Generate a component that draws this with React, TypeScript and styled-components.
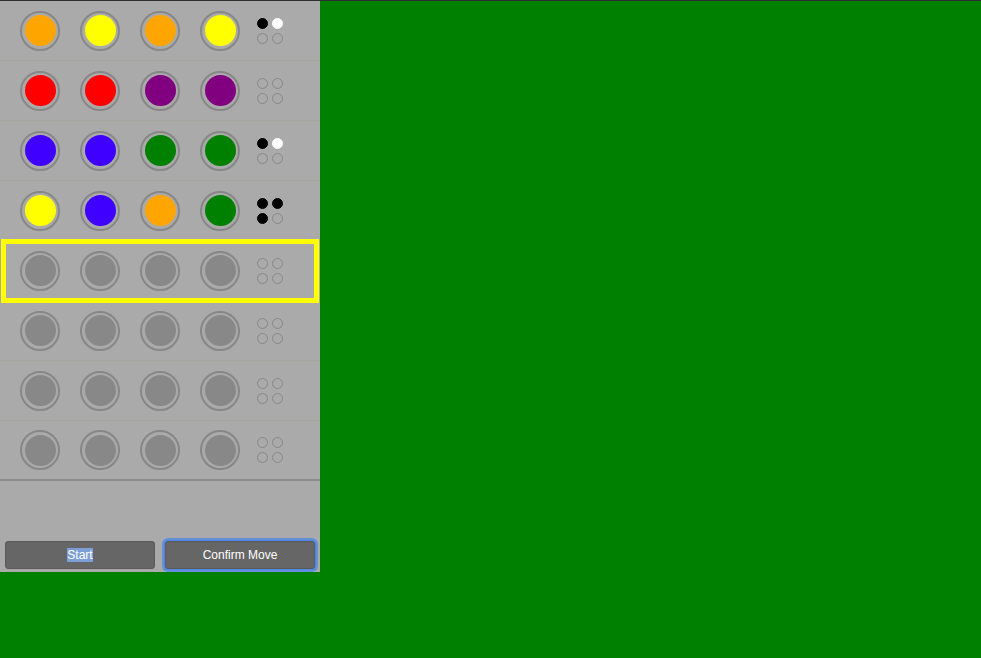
import React from "react";
import styled, { createGlobalStyle, css } from "styled-components";

type Feedback = "black" | "white" | "empty";

interface Guess {
  pegs: (string | null)[];
  feedback: Feedback[];
}

const GlobalStyle = createGlobalStyle`
  html, body {
    margin: 0;
    padding: 0;
    background: #008000;
  }
  body {
    font-family: "Liberation Sans", Arial, Helvetica, sans-serif;
  }
  * {
    box-sizing: border-box;
  }
`;

const Page = styled.div`
  min-height: 100vh;
  background: #008000;
  border-top: 1px solid #2e2e2e;
`;

const Board = styled.div`
  width: 320px;
  background: #aaaaaa;
  display: flex;
  flex-direction: column;
`;

const Row = styled.div<{ $active?: boolean; $last?: boolean }>`
  position: relative;
  height: 60px;
  display: grid;
  grid-template-columns: repeat(4, 60px) auto;
  align-items: center;
  padding-left: 10px;
  border-bottom: ${(p) => (p.$last ? "2px solid #8c8c8c" : "1px solid #a6a6a0")};

  ${(p) =>
    p.$active &&
    css`
      &::after {
        content: "";
        position: absolute;
        top: -2px;
        bottom: -3px;
        left: 1px;
        right: 1px;
        border: 5px solid #ffff00;
        pointer-events: none;
      }
    `}
`;

const Hole = styled.div`
  justify-self: center;
  width: 40px;
  height: 40px;
  border-radius: 50%;
  border: 2.5px solid #878787;
  display: flex;
  align-items: center;
  justify-content: center;
`;

const Peg = styled.div<{ $color: string | null }>`
  width: 31px;
  height: 31px;
  border-radius: 50%;
  background: ${(p) => p.$color ?? "#888888"};
`;

const Hints = styled.div`
  margin-left: 7px;
  display: grid;
  grid-template-columns: 11px 11px;
  grid-template-rows: 11px 11px;
  gap: 4px;
`;

const Hint = styled.div<{ $kind: Feedback }>`
  width: 11px;
  height: 11px;
  border-radius: 50%;
  border: 1px solid ${(p) => (p.$kind === "empty" ? "#888888" : p.$kind === "black" ? "#000" : "#fff")};
  background: ${(p) => (p.$kind === "empty" ? "transparent" : p.$kind === "black" ? "#000" : "#fff")};
`;

const Footer = styled.div`
  height: 91px;
  display: flex;
  align-items: flex-end;
  gap: 10px;
  padding: 0 5px 3px;
`;

const Button = styled.button<{ $focused?: boolean }>`
  flex: 1;
  height: 28px;
  background: #666666;
  color: #ffffff;
  border: 1px solid #5a5a5a;
  border-radius: 3px;
  font-family: "Liberation Sans", Arial, Helvetica, sans-serif;
  font-size: 12px;
  cursor: pointer;
  ${(p) =>
    p.$focused &&
    css`
      box-shadow: 0 0 0 1px #4f86e8, 0 0 0 3px rgba(79, 134, 232, 0.75);
    `}
`;

const Selected = styled.span`
  background: #7d9fd6;
`;

const O = "#ffa500";
const Y = "#ffff00";
const R = "#ff0000";
const P = "#800080";
const B = "#4000ff";
const G = "#008000";

const empty: Guess = { pegs: [null, null, null, null], feedback: ["empty", "empty", "empty", "empty"] };

const guesses: Guess[] = [
  { pegs: [O, Y, O, Y], feedback: ["black", "white", "empty", "empty"] },
  { pegs: [R, R, P, P], feedback: ["empty", "empty", "empty", "empty"] },
  { pegs: [B, B, G, G], feedback: ["black", "white", "empty", "empty"] },
  { pegs: [Y, B, O, G], feedback: ["black", "black", "black", "empty"] },
  empty,
  empty,
  empty,
  empty,
];

const ACTIVE_ROW = 4;

export default function App() {
  return (
    <>
      <GlobalStyle />
      <Page>
        <Board>
          {guesses.map((g, i) => (
            <Row key={i} $active={i === ACTIVE_ROW} $last={i === guesses.length - 1}>
              {g.pegs.map((c, j) => (
                <Hole key={j}>
                  <Peg $color={c} />
                </Hole>
              ))}
              <Hints>
                {g.feedback.map((f, j) => (
                  <Hint key={j} $kind={f} />
                ))}
              </Hints>
            </Row>
          ))}
          <Footer>
            <Button>
              <Selected>Start</Selected>
            </Button>
            <Button $focused>Confirm Move</Button>
          </Footer>
        </Board>
      </Page>
    </>
  );
}
